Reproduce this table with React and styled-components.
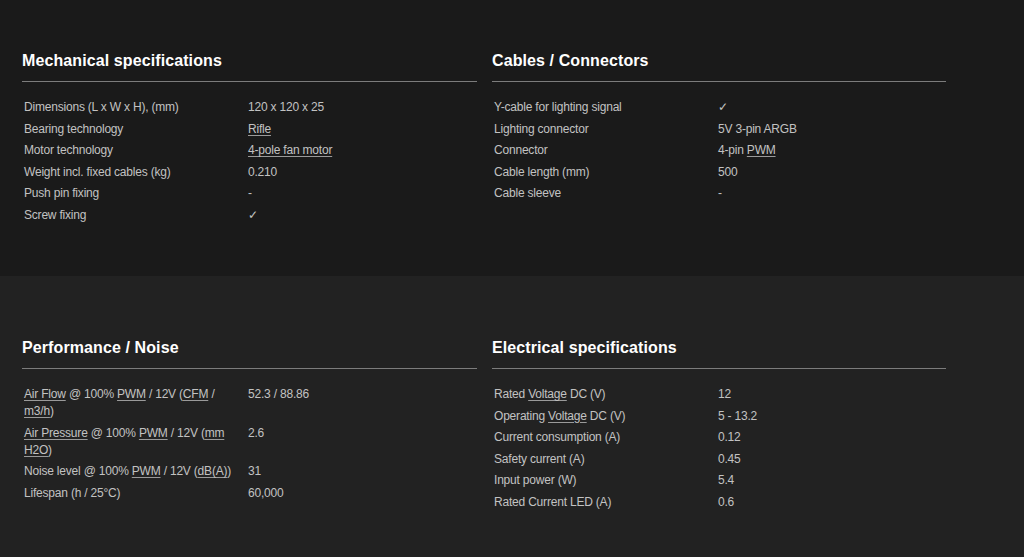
import React from 'react'
import styled, { createGlobalStyle } from 'styled-components'

const GlobalStyle = createGlobalStyle`
  html, body {
    margin: 0;
    padding: 0;
    background: #1a1a1a;
  }
  body {
    font-family: "Liberation Sans", Arial, sans-serif;
  }
`

const U = ({ children }) => <Abbr>{children}</Abbr>

const sections = [
  {
    tone: 'dark',
    blocks: [
      {
        title: 'Mechanical specifications',
        rows: [
          ['Dimensions (L x W x H), (mm)', '120 x 120 x 25'],
          ['Bearing technology', <U>Rifle</U>],
          ['Motor technology', <U>4-pole fan motor</U>],
          ['Weight incl. fixed cables (kg)', '0.210'],
          ['Push pin fixing', '-'],
          ['Screw fixing', '✓'],
        ],
      },
      {
        title: 'Cables / Connectors',
        rows: [
          ['Y-cable for lighting signal', '✓'],
          ['Lighting connector', '5V 3-pin ARGB'],
          ['Connector', <>4-pin <U>PWM</U></>],
          ['Cable length (mm)', '500'],
          ['Cable sleeve', '-'],
        ],
      },
    ],
  },
  {
    tone: 'light',
    blocks: [
      {
        title: 'Performance / Noise',
        rows: [
          [<><U>Air Flow</U> @ 100% <U>PWM</U> / 12V (<U>CFM</U> / <U>m3/h</U>)</>, '52.3 / 88.86'],
          [<><U>Air Pressure</U> @ 100% <U>PWM</U> / 12V (<U>mm</U> <U>H2O</U>)</>, '2.6'],
          [<>Noise level @ 100% <U>PWM</U> / 12V (<U>dB(A)</U>)</>, '31'],
          ['Lifespan (h / 25°C)', '60,000'],
        ],
      },
      {
        title: 'Electrical specifications',
        rows: [
          [<>Rated <U>Voltage</U> DC (V)</>, '12'],
          [<>Operating <U>Voltage</U> DC (V)</>, '5 - 13.2'],
          ['Current consumption (A)', '0.12'],
          ['Safety current (A)', '0.45'],
          ['Input power (W)', '5.4'],
          ['Rated Current LED (A)', '0.6'],
        ],
      },
    ],
  },
]

const App = () => {
  return (
    <>
      <GlobalStyle />
      <Page>
        {sections.map((section, i) => (
          <Section key={i} $tone={section.tone}>
            <Columns>
              {section.blocks.map((block) => (
                <Block key={block.title}>
                  <Heading>{block.title}</Heading>
                  <SpecList>
                    {block.rows.map((row, j) => (
                      <Row key={j}>
                        <Label>{row[0]}</Label>
                        <Value>{row[1]}</Value>
                      </Row>
                    ))}
                  </SpecList>
                </Block>
              ))}
            </Columns>
          </Section>
        ))}
      </Page>
    </>
  )
}

const Page = styled.div`
  width: 1024px;
  height: 557px;
  overflow: hidden;
  display: flex;
  flex-direction: column;
`

const Section = styled.section`
  background: ${(p) => (p.$tone === 'dark' ? '#1a1a1a' : '#222222')};
  height: ${(p) => (p.$tone === 'dark' ? '276px' : '281px')};
  padding-top: ${(p) => (p.$tone === 'dark' ? '51px' : '62px')};
  box-sizing: border-box;
`

const Columns = styled.div`
  display: grid;
  grid-template-columns: 455px 454px;
  column-gap: 15px;
  padding-left: 22px;
`

const Block = styled.div`
  display: flex;
  flex-direction: column;
`

const Heading = styled.h3`
  margin: 0;
  font-size: 16px;
  line-height: 19px;
  font-weight: 700;
  letter-spacing: 0.1px;
  color: #ffffff;
  padding-bottom: 11px;
  border-bottom: 1px solid #7c7c7c;
`

const SpecList = styled.div`
  display: flex;
  flex-direction: column;
  gap: 4.5px;
  margin-top: 17px;
`

const Row = styled.div`
  display: grid;
  grid-template-columns: 226px 1fr;
  font-size: 12px;
  line-height: 17px;
  letter-spacing: -0.2px;
  color: #c2c2c2;
`

const Label = styled.div`
  padding-left: 2px;
  padding-right: 10px;
`

const Value = styled.div``

const Abbr = styled.span`
  text-decoration: underline;
  text-decoration-color: #9a9a9a;
  text-underline-offset: 2px;
`

export default App
